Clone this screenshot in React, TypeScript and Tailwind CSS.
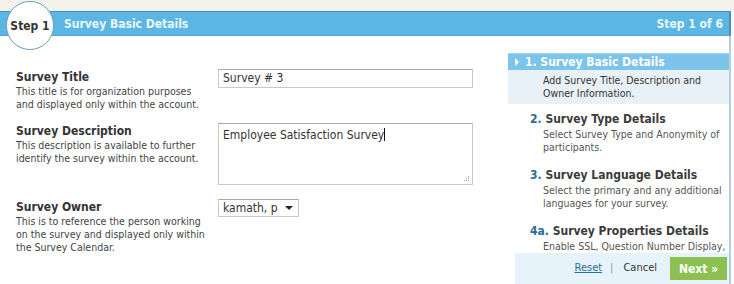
const font = "font-['DejaVu_Sans_Condensed','Liberation_Sans',sans-serif]";

const fields = [
  {
    label: "Survey Title",
    desc: ["This title is for organization purposes", "and displayed only within the account."],
  },
  {
    label: "Survey Description",
    desc: ["This description is available to further", "identify the survey within the account."],
  },
  {
    label: "Survey Owner",
    desc: [
      "This is to reference the person working",
      "on the survey and displayed only within",
      "the Survey Calendar.",
    ],
  },
];

const steps = [
  { num: "2.", title: "Survey Type Details", desc: ["Select Survey Type and Anonymity of", "participants."] },
  { num: "3.", title: "Survey Language Details", desc: ["Select the primary and any additional", "languages for your survey."] },
  { num: "4a.", title: "Survey Properties Details", desc: ["Enable SSL, Question Number Display,"] },
];

function FieldLabel({ label, desc }: { label: string; desc: string[] }) {
  return (
    <div className="w-[202px] shrink-0 pt-[1px]">
      <div className="text-[12px] leading-[15px] font-bold text-[#333]">{label}</div>
      {desc.map((line) => (
        <div key={line} className="text-[10.5px] leading-[13px] text-[#444] whitespace-nowrap">
          {line}
        </div>
      ))}
    </div>
  );
}

export default function App() {
  return (
    <div className={`w-[734px] h-[284px] bg-white overflow-hidden ${font}`}>
      {/* textured strip */}
      <div className="h-[11px] bg-[#f2f2ea]" />

      {/* header bar */}
      <div className="relative w-[731px] h-[25px] bg-[#5cb6e3] border-t border-t-[#3f93c4] border-b border-b-[#4ea6d6] border-r-2 border-r-[#4a8fb8] flex items-center justify-between pl-[64px] pr-[6px]">
        <span className="text-[12px] font-bold text-[#eaf7fd]">Survey Basic Details</span>
        <span className="text-[12px] font-bold text-[#eaf7fd]">Step 1 of 6</span>

        <div className="absolute left-[6px] top-[-11px] w-[48px] h-[49px] rounded-full bg-white border border-[#6a9fc2] flex items-center justify-center">
          <span className="text-[12px] font-bold text-[#333]">Step 1</span>
        </div>
      </div>

      <div className="flex w-[731px] h-[248px] border-r-2 border-r-[#b7cfdf]">
        {/* form */}
        <div className="w-[508px] shrink-0 pl-[16px] pt-[33px]">
          <div className="flex">
            <FieldLabel {...fields[0]} />
            <div className="w-[255px] h-[19px] border border-[#c9c9c9] border-t-[#a9a9a9] px-[4px] text-[12px] leading-[17px] text-[#333]">
              Survey # 3
            </div>
          </div>

          <div className="flex mt-[12px]">
            <FieldLabel {...fields[1]} />
            <div className="relative w-[255px] h-[62px] border border-[#c9c9c9] border-t-[#a9a9a9] px-[4px] pt-[3px] text-[12px] leading-[16px] text-[#333]">
              Employee Satisfaction Survey<span className="inline-block w-px h-[13px] bg-[#111] align-[-2px]" />
              <div className="absolute right-[3px] bottom-[3px] grid grid-cols-3 gap-[1px]">
                <span />
                <span />
                <span className="w-px h-px bg-[#999]" />
                <span />
                <span className="w-px h-px bg-[#999]" />
                <span className="w-px h-px bg-[#999]" />
                <span className="w-px h-px bg-[#999]" />
                <span className="w-px h-px bg-[#999]" />
                <span className="w-px h-px bg-[#999]" />
              </div>
            </div>
          </div>

          <div className="flex mt-[14px]">
            <FieldLabel {...fields[2]} />
            <div className="w-[81px] h-[18px] border border-[#c9c9c9] border-t-[#a9a9a9] flex items-center justify-between pl-[4px] pr-[5px] text-[12px] text-[#333]">
              <span>kamath, p</span>
              <span className="w-0 h-0 border-l-[4px] border-r-[4px] border-t-[4px] border-l-transparent border-r-transparent border-t-[#222]" />
            </div>
          </div>
        </div>

        {/* steps sidebar */}
        <div className="flex-1 flex flex-col pt-[17px]">
          <div className="flex-1 overflow-hidden">
            <div className="h-[17px] bg-[#7cc4e9] border-t border-t-[#a6d6ef] flex items-center pl-[7px] text-[12px] font-bold text-white">
              <span className="w-0 h-0 border-t-[4px] border-b-[4px] border-l-[4px] border-t-transparent border-b-transparent border-l-white mr-[6px]" />
              1. Survey Basic Details
            </div>
            <div className="bg-[#e8f1f7] pl-[35px] pt-[4px] pb-[4px] text-[10.5px] leading-[13px] text-[#333] whitespace-nowrap">
              <div>Add Survey Title, Description and</div>
              <div>Owner Information.</div>
            </div>

            <div className="pl-[22px] pt-[6px]">
              {steps.map((s) => (
                <div key={s.num} className="mb-[12px]">
                  <div className="h-[18px] text-[12px] leading-[18px] font-bold text-[#3b3b3b] whitespace-nowrap">
                    <span className="text-[#2c6c92]">{s.num}</span> {s.title}
                  </div>
                  <div className="pl-[13px] text-[10.5px] leading-[13px] text-[#555] whitespace-nowrap">
                    {s.desc.map((line) => (
                      <div key={line}>{line}</div>
                    ))}
                  </div>
                </div>
              ))}
            </div>
          </div>

          <div className="ml-[7px] h-[31px] bg-[#e6f3fb] flex items-center justify-end pr-[2px] text-[11px]">
            <a className="text-[#2b6f96] underline">Reset</a>
            <span className="text-[#999] ml-[8px]">|</span>
            <span className="text-[#333] ml-[10px]">Cancel</span>
            <button className="ml-[13px] w-[57px] h-[23px] bg-[#8cc152] text-white font-bold text-[12px]">
              Next »
            </button>
          </div>
        </div>
      </div>
    </div>
  );
}
